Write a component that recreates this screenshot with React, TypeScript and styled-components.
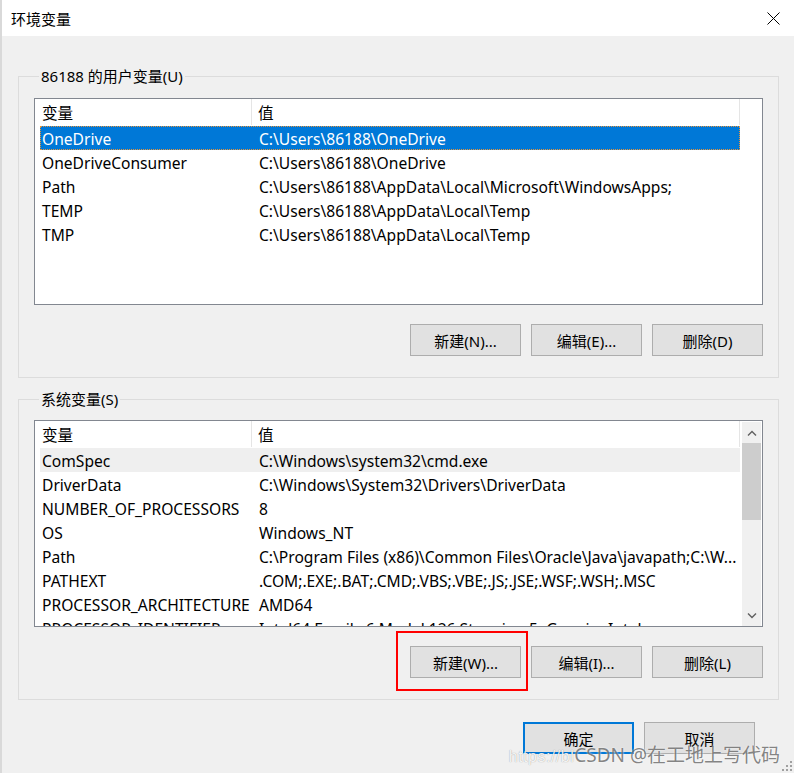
import React from 'react';
import styled, { createGlobalStyle } from 'styled-components';

const GlobalStyle = createGlobalStyle`
  html, body {
    margin: 0;
    padding: 0;
    background: #f0f0f0;
  }
  body {
    font-family: "Segoe UI", "Noto Sans", "Noto Sans CJK SC", sans-serif;
    font-size: 15px;
    color: #000;
  }
`;

type Row = { name: string; value: string };

const userVars: Row[] = [
  { name: 'OneDrive', value: 'C:\\Users\\86188\\OneDrive' },
  { name: 'OneDriveConsumer', value: 'C:\\Users\\86188\\OneDrive' },
  { name: 'Path', value: 'C:\\Users\\86188\\AppData\\Local\\Microsoft\\WindowsApps;' },
  { name: 'TEMP', value: 'C:\\Users\\86188\\AppData\\Local\\Temp' },
  { name: 'TMP', value: 'C:\\Users\\86188\\AppData\\Local\\Temp' },
];

const systemVars: Row[] = [
  { name: 'ComSpec', value: 'C:\\Windows\\system32\\cmd.exe' },
  { name: 'DriverData', value: 'C:\\Windows\\System32\\Drivers\\DriverData' },
  { name: 'NUMBER_OF_PROCESSORS', value: '8' },
  { name: 'OS', value: 'Windows_NT' },
  { name: 'Path', value: 'C:\\Program Files (x86)\\Common Files\\Oracle\\Java\\javapath;C:\\W...' },
  { name: 'PATHEXT', value: '.COM;.EXE;.BAT;.CMD;.VBS;.VBE;.JS;.JSE;.WSF;.WSH;.MSC' },
  { name: 'PROCESSOR_ARCHITECTURE', value: 'AMD64' },
  { name: 'PROCESSOR_IDENTIFIER', value: 'Intel64 Family 6 Model 126 Stepping 5, GenuineIntel' },
];

const Screen = styled.div`
  display: flex;
  width: 794px;
  height: 773px;
  overflow: hidden;
  position: relative;
`;

const BackWindowEdge = styled.div`
  width: 2px;
  flex-shrink: 0;
  background: #d9d9d9;
`;

const Dialog = styled.div`
  flex: 1;
  display: flex;
  flex-direction: column;
  background: #f0f0f0;
`;

const TitleBar = styled.div`
  height: 36px;
  flex-shrink: 0;
  display: flex;
  align-items: center;
  justify-content: space-between;
  background: #fff;
  padding: 0 14px 0 9px;
`;

const Title = styled.span`
  font-size: 15px;
`;

const CloseButton = styled.div`
  width: 14px;
  height: 14px;
  display: flex;
  align-items: center;
  justify-content: center;
`;

const Body = styled.div`
  display: flex;
  flex-direction: column;
  padding: 30px 15px 0 16px;
`;

const Group = styled.fieldset<{ $gapTop?: number; $padTop?: number }>`
  margin: ${p => p.$gapTop ?? 0}px 0 0 0;
  padding: ${p => p.$padTop ?? 12}px 15px 21px 15px;
  border: 1px solid #dcdcdc;
  min-width: 0;
`;

const Legend = styled.legend`
  padding: 0 2px;
  margin-left: 5px;
  font-size: 15px;
  line-height: 20px;
  color: #000;
`;

const ListBox = styled.div`
  height: 207px;
  box-sizing: border-box;
  border: 1px solid #828790;
  background: #fff;
  display: flex;
  overflow: hidden;
`;

const ListContent = styled.div`
  flex: 1;
  padding-left: 5px;
  overflow: hidden;
  font-size: 15.6px;
`;

const HeaderRow = styled.div`
  display: flex;
  height: 26px;
  align-items: center;
  border-right: 1px solid #e5e5e5;
`;

const HeaderCell = styled.div<{ $first?: boolean }>`
  height: 100%;
  display: flex;
  align-items: center;
  box-sizing: border-box;
  ${p => (p.$first ? 'width: 212px; border-right: 1px solid #e5e5e5; padding-left: 2px;' : 'flex: 1; padding-left: 6px;')}
`;

const Rows = styled.div`
  padding-top: 1px;
  display: flex;
  flex-direction: column;
`;

const ItemRow = styled.div<{ $selected?: boolean; $hover?: boolean }>`
  display: flex;
  height: 24px;
  flex-shrink: 0;
  align-items: center;
  box-sizing: border-box;
  padding-top: 2px;
  white-space: nowrap;
  background: ${p => (p.$selected ? '#0078d7' : p.$hover ? '#efefef' : 'transparent')};
  color: ${p => (p.$selected ? '#fff' : '#000')};
  outline: ${p => (p.$selected ? '1px dotted #e8943a' : 'none')};
  outline-offset: -1px;
`;

const NameCell = styled.div`
  width: 212px;
  padding-left: 2px;
  box-sizing: border-box;
  overflow: hidden;
`;

const ValueCell = styled.div`
  flex: 1;
  padding-left: 7px;
  overflow: hidden;
`;

const Gutter = styled.div`
  width: 22px;
  flex-shrink: 0;
  display: flex;
  padding: 1px 1px 0 2px;
  box-sizing: border-box;
`;

const ScrollBar = styled.div`
  flex: 1;
  display: flex;
  flex-direction: column;
  background: #f0f0f0;
`;

const ScrollArrow = styled.div`
  height: 21px;
  display: flex;
  align-items: center;
  justify-content: center;
  flex-shrink: 0;
`;

const ScrollThumb = styled.div`
  height: 77px;
  background: #cdcdcd;
  flex-shrink: 0;
`;

const ScrollTrack = styled.div`
  flex: 1;
`;

const ButtonRow = styled.div`
  display: flex;
  justify-content: flex-end;
  gap: 10px;
  margin-top: 19px;
`;

const Button = styled.button<{ $default?: boolean }>`
  width: 111px;
  height: 32px;
  box-sizing: border-box;
  background: #e1e1e1;
  border: ${p => (p.$default ? '2px solid #0078d7' : '1px solid #adadad')};
  font-family: inherit;
  font-size: 15px;
  color: #000;
  padding: 0;
  cursor: default;
`;

const Marked = styled.span`
  position: relative;
  display: inline-flex;
  &::after {
    content: '';
    position: absolute;
    left: -14px;
    right: -7px;
    top: -15px;
    bottom: -13px;
    border: 2px solid #ff0000;
    pointer-events: none;
  }
`;

const Footer = styled.div`
  display: flex;
  justify-content: flex-end;
  gap: 10px;
  padding: 22px 24px 0 0;
`;

const Watermark = styled.div`
  position: absolute;
  right: 14px;
  bottom: 5px;
  display: flex;
  align-items: baseline;
  white-space: nowrap;
  pointer-events: none;
`;

const WatermarkUrl = styled.span`
  font-family: "Liberation Sans", sans-serif;
  font-size: 16px;
  color: rgba(255, 255, 255, 0.9);
  text-shadow: 0 0 1px rgba(0, 0, 0, 0.4);
  letter-spacing: 0.5px;
`;

const WatermarkName = styled.span`
  font-family: "Noto Sans", "Noto Sans CJK SC", sans-serif;
  font-size: 19px;
  color: rgba(80, 80, 80, 0.7);
  text-shadow: 0 0 2px rgba(255, 255, 255, 0.9);
`;

const Grip = styled.svg`
  position: absolute;
  right: 1px;
  bottom: 1px;
`;

const Chevron = ({ up }: { up?: boolean }) => (
  <svg width="10" height="6" viewBox="0 0 10 6">
    <path
      d={up ? 'M1 5.5 L5 1.5 L9 5.5' : 'M1 0.5 L5 4.5 L9 0.5'}
      fill="none"
      stroke="#606060"
      strokeWidth="1.4"
    />
  </svg>
);

type ListProps = {
  rows: Row[];
  selected?: number;
  hover?: number;
  scroll?: boolean;
};

const VariableList = ({ rows, selected, hover, scroll }: ListProps) => (
  <ListBox>
    <ListContent>
      <HeaderRow>
        <HeaderCell $first>变量</HeaderCell>
        <HeaderCell>值</HeaderCell>
      </HeaderRow>
      <Rows>
        {rows.map((r, i) => (
          <ItemRow key={r.name} $selected={i === selected} $hover={i === hover}>
            <NameCell>{r.name}</NameCell>
            <ValueCell>{r.value}</ValueCell>
          </ItemRow>
        ))}
      </Rows>
    </ListContent>
    <Gutter>
      {scroll && (
        <ScrollBar>
          <ScrollArrow>
            <Chevron up />
          </ScrollArrow>
          <ScrollThumb />
          <ScrollTrack />
          <ScrollArrow>
            <Chevron />
          </ScrollArrow>
        </ScrollBar>
      )}
    </Gutter>
  </ListBox>
);

export default function App() {
  return (
    <Screen>
      <GlobalStyle />
      <BackWindowEdge />
      <Dialog>
        <TitleBar>
          <Title>环境变量</Title>
          <CloseButton>
            <svg width="13" height="13" viewBox="0 0 13 13">
              <path d="M0.5 0.5 L12.5 12.5 M12.5 0.5 L0.5 12.5" stroke="#000" strokeWidth="1" />
            </svg>
          </CloseButton>
        </TitleBar>
        <Body>
          <Group>
            <Legend>86188 的用户变量(U)</Legend>
            <VariableList rows={userVars} selected={0} />
            <ButtonRow>
              <Button>新建(N)...</Button>
              <Button>编辑(E)...</Button>
              <Button>删除(D)</Button>
            </ButtonRow>
          </Group>
          <Group $gapTop={11} $padTop={11}>
            <Legend>系统变量(S)</Legend>
            <VariableList rows={systemVars} hover={0} scroll />
            <ButtonRow>
              <Marked>
                <Button>新建(W)...</Button>
              </Marked>
              <Button>编辑(I)...</Button>
              <Button>删除(L)</Button>
            </ButtonRow>
          </Group>
          <Footer>
            <Button $default>确定</Button>
            <Button>取消</Button>
          </Footer>
        </Body>
      </Dialog>
      <Watermark>
        <WatermarkUrl>https://bl</WatermarkUrl>
        <WatermarkName>CSDN @在工地上写代码</WatermarkName>
      </Watermark>
      <Grip width="12" height="12" viewBox="0 0 12 12">
        {[
          [10, 2],
          [10, 6],
          [6, 6],
          [10, 10],
          [6, 10],
          [2, 10],
        ].map(([x, y]) => (
          <rect key={`${x}-${y}`} x={x - 1} y={y - 1} width="2" height="2" fill="#a0a0a0" />
        ))}
      </Grip>
    </Screen>
  );
}
